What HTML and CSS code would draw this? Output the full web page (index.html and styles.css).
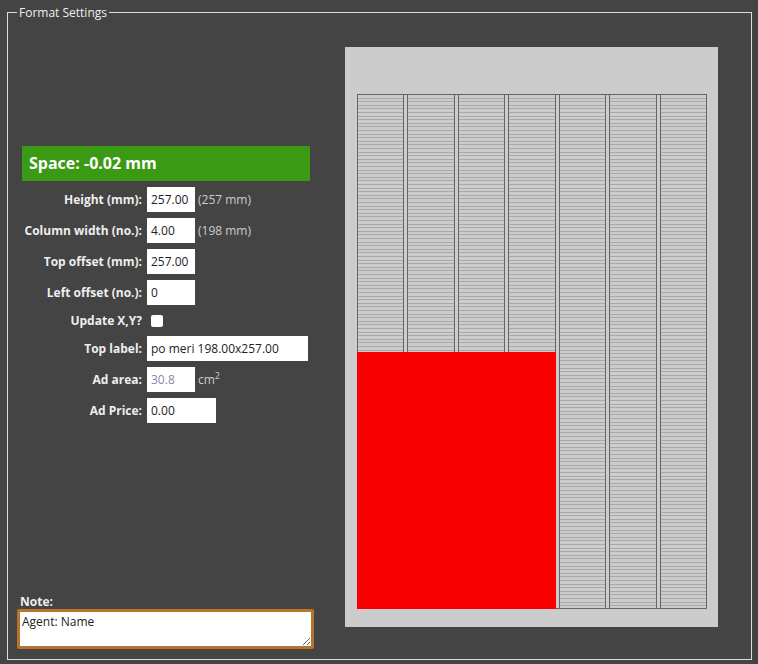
FILE: index.html
```html
<!DOCTYPE html>
<html>
<head>
<meta charset="utf-8">
<link rel="stylesheet" href="styles.css">
</head>
<body>
<fieldset class="settings">
  <legend class="legend">Format Settings</legend>
  <div class="layout">
    <div class="form-col">
      <div class="space-bar">Space: -0.02 mm</div>
      <div class="fields">
        <label class="lbl">Height (mm):</label>
        <div class="ctl"><input class="inp w48" value="257.00"><span class="hint">(257 mm)</span></div>
        <label class="lbl">Column width (no.):</label>
        <div class="ctl"><input class="inp w48" value="4.00"><span class="hint">(198 mm)</span></div>
        <label class="lbl">Top offset (mm):</label>
        <div class="ctl"><input class="inp w48" value="257.00"></div>
        <label class="lbl">Left offset (no.):</label>
        <div class="ctl"><input class="inp w48" value="0"></div>
        <label class="lbl">Update X,Y?</label>
        <div class="ctl short"><input type="checkbox" class="chk"></div>
        <label class="lbl">Top label:</label>
        <div class="ctl"><input class="inp w161" value="po meri 198.00x257.00"></div>
        <label class="lbl">Ad area:</label>
        <div class="ctl"><input class="inp w48 muted" value="30.8" readonly><span class="hint unit">cm<sup class="sup">2</sup></span></div>
        <label class="lbl">Ad Price:</label>
        <div class="ctl"><input class="inp w69" value="0.00"></div>
      </div>
      <div class="note">
        <label class="note-lbl">Note:</label>
        <textarea class="note-ta">Agent: Name</textarea>
      </div>
    </div>
    <div class="preview">
      <div class="grid">
        <div class="col"></div>
        <div class="col"></div>
        <div class="col"></div>
        <div class="col"></div>
        <div class="col"></div>
        <div class="col"></div>
        <div class="col"></div>
        <div class="ad"></div>
      </div>
    </div>
  </div>
</fieldset>
</body>
</html>
```

FILE: styles.css
```css
html, body {
  margin: 0;
  background: #444444;
}
body {
  font-family: "Open Sans", sans-serif;
  font-size: 12px;
  color: #eeeeee;
  height: 664px;
  overflow: hidden;
}
.settings {
  margin: 4px 6px 0 7px;
  padding: 0 10px 10px;
  border: 1px solid #dddddd;
  min-width: 0;
}
.legend {
  padding: 0 2px;
  margin-left: -1px;
  font-size: 12px;
  line-height: 17px;
  color: #eeeeee;
}
.layout {
  display: flex;
}
.form-col {
  width: 312px;
  display: flex;
  flex-direction: column;
}
.space-bar {
  margin: 125px 0 0 4px;
  width: 288px;
  height: 35px;
  box-sizing: border-box;
  padding-left: 7px;
  background: #3b9a13;
  color: #ffffff;
  font-weight: 700;
  font-size: 16px;
  line-height: 35px;
}
.fields {
  display: grid;
  grid-template-columns: 124px auto;
  column-gap: 5px;
  row-gap: 6px;
  margin-top: 6px;
  align-items: center;
}
.lbl {
  text-align: right;
  font-weight: 700;
  color: #eeeeee;
  white-space: nowrap;
}
.ctl {
  display: flex;
  align-items: center;
  height: 25px;
}
.ctl.short {
  height: 19px;
}
.inp {
  box-sizing: border-box;
  height: 25px;
  margin: 0;
  padding: 0 3px;
  border: 1px solid #ffffff;
  background: #ffffff;
  font-family: "Open Sans", sans-serif;
  font-size: 12px;
  color: #222222;
  outline: none;
}
.w48 { width: 48px; }
.w161 { width: 161px; }
.w69 { width: 69px; }
.muted {
  color: #8886a8;
}
.hint {
  margin-left: 3px;
  color: #cccccc;
}
.sup {
  font-size: 9px;
  vertical-align: 5px;
  line-height: 0;
}
.chk {
  appearance: none;
  -webkit-appearance: none;
  width: 12px;
  height: 12px;
  margin: 0 0 0 4px;
  background: #ffffff;
  border-radius: 2px;
  border: none;
}
.note {
  margin-top: auto;
}
.note-lbl {
  display: block;
  margin-left: 2px;
  font-weight: 700;
  line-height: 15px;
  color: #eeeeee;
}
.note-ta {
  display: block;
  box-sizing: border-box;
  width: 297px;
  height: 40px;
  margin: 0 0 0 -1px;
  padding: 1px 2px;
  border: 3px solid #b8742a;
  border-radius: 2px;
  background: #ffffff;
  font-family: "Open Sans", sans-serif;
  font-size: 12px;
  color: #222222;
  outline: none;
}
.preview {
  margin: 26px 0 22px 15px;
  width: 373px;
  height: 580px;
  box-sizing: border-box;
  padding: 47px 11px 18px 12px;
  background: #cccccc;
}
.grid {
  position: relative;
  display: flex;
  gap: 3px;
  height: 515px;
  box-sizing: border-box;
  border-top: 1px solid #666666;
  border-bottom: 1px solid #666666;
}
.col {
  flex: 1;
  border-left: 1px solid #666666;
  border-right: 1px solid #666666;
  background: repeating-linear-gradient(to bottom, #cccccc 0, #cccccc 2.6px, #a9a9a9 2.6px, #a9a9a9 3.6px);
}
.ad {
  position: absolute;
  left: 0;
  top: 257px;
  width: 199px;
  bottom: -1px;
  background: #f80000;
}
```
